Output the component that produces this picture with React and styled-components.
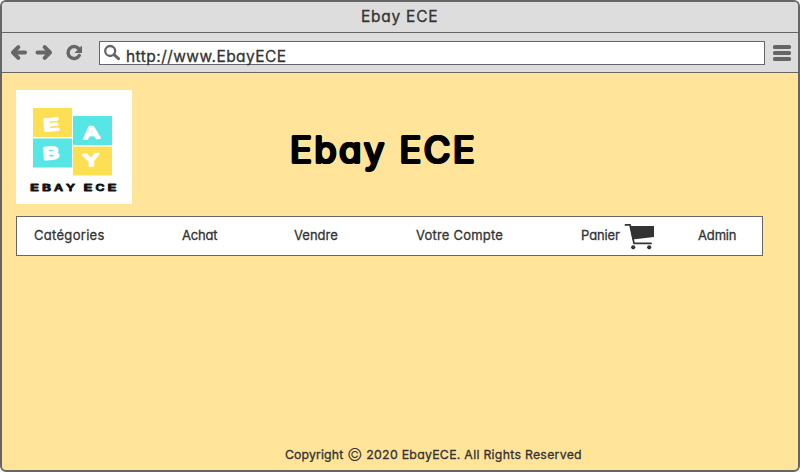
import React from "react";
import styled, { createGlobalStyle } from "styled-components";

const Global = createGlobalStyle`
  * { box-sizing: border-box; }
  body { margin: 0; background: #fff; overflow: hidden; }
`;

const Window = styled.div`
  width: 800px;
  height: 472px;
  display: flex;
  flex-direction: column;
  border: 2px solid #666;
  border-radius: 6px;
  overflow: hidden;
  background: #ffe49a;
  color: #333;
  font-family: Inter, "Liberation Sans", sans-serif;
  font-feature-settings: "cv11", "calt" 0;
`;

const Label = styled.span`
  display: block;
  white-space: pre;
  font-size: ${(p) => p.$size}px;
  line-height: 20px;
  letter-spacing: ${(p) => p.$spacing || 0}px;
  -webkit-text-stroke: ${(p) => p.$stroke || 0.3}px currentColor;
`;

const TitleBar = styled.header`
  height: 31px;
  padding: 5px 0 0 359px;
  background: #ddd;
  border-bottom: 1px solid #666;
`;

const Toolbar = styled.div`
  height: 40px;
  display: flex;
  align-items: flex-start;
  padding: 8px 6px 0 8px;
  background: #ddd;
  border-bottom: 1px solid #666;
`;

const NavIcons = styled.svg`
  width: 80px;
  height: 24px;
  margin-right: 9px;
  flex: none;
`;

const AddressBar = styled.div`
  width: 666px;
  height: 24px;
  display: flex;
  flex: none;
  background: #fff;
  border: 1px solid #666;
`;

const SearchIcon = styled.svg`
  width: 20px;
  height: 22px;
  margin: 0 6px 0 0;
`;

const Address = styled.div`
  padding-top: 5px;
`;

const MenuIcon = styled.svg`
  width: 20px;
  height: 24px;
  margin-left: 7px;
  flex: none;
`;

const Page = styled.main`
  flex: 1;
  display: flex;
  flex-direction: column;
  padding: 17px 0 0 14px;
`;

const Banner = styled.div`
  display: flex;
  height: 114px;
`;

const Logo = styled.svg`
  width: 116px;
  height: 114px;
`;

/* The ring of hard shadows thickens the strokes and rounds their ends. */
const Heading = styled.h1`
  margin: 35px 0 0 158px;
  color: #000;
  font-size: 36.5px;
  line-height: 50px;
  font-weight: 400;
  letter-spacing: 2.4px;
  white-space: pre;
  text-shadow:
    1.4px 0 #000, -1.4px 0 #000, 0 1.4px #000, 0 -1.4px #000,
    1px 1px #000, -1px 1px #000, 1px -1px #000, -1px -1px #000;
`;

const NavBar = styled.nav`
  width: 747px;
  height: 40px;
  margin-top: 12px;
  padding: 8px 0 0 17px;
  display: grid;
  grid-template-columns: 148px 112px 122px 165px 117px 1fr;
  background: #fff;
  border: 1px solid #666;
`;

const NavItem = styled.div`
  display: flex;
  height: 28px;
`;

const Cart = styled.svg`
  width: 32px;
  height: 28px;
  margin: -2px 0 0 3px;
  flex: none;
`;

const Footer = styled.footer`
  display: flex;
  margin: auto 0 5px 269px;
`;

const CopyrightSign = styled.span`
  width: 23px;
  text-align: center;
  font-size: 17px;
  line-height: 20px;
  font-weight: 300;
`;

const items = [
  { text: "Catégories", spacing: 0.3 },
  { text: "Achat", spacing: -0.2 },
  { text: "Vendre", spacing: 0 },
  { text: "Votre Compte", spacing: 0.2 },
  { text: "Panier", spacing: -0.1, cart: true },
  { text: "Admin", spacing: -0.15 },
];

const blocks = [
  [17, 18, "#fddf54", "E", 35.5, 40.5],
  [17, 48.5, "#57e6e6", "B", 35, 69],
  [57, 26, "#57e6e6", "A", 75.5, 48.5],
  [57, 56.5, "#fddf54", "Y", 75.5, 76],
];

function BrandLogo() {
  return (
    <Logo viewBox="0 0 116 114">
      <rect width="116" height="114" fill="#fff" />
      {blocks.map(([x, y, color, letter, tx, ty]) => (
        <g key={letter}>
          <rect x={x} y={y} width="39" height="29" fill={color} />
          <text
            x={tx - 8} y={ty} fontSize="16" fontWeight="400"
            textLength="16" lengthAdjust="spacingAndGlyphs"
            transform={`rotate(-4 ${tx} ${ty - 5})`}
            fill="#fff" stroke="#fff" strokeWidth="2.100" strokeLinejoin="round"
          >{letter}</text>
        </g>
      ))}
      {"EBAY ECE".split("").map((letter, i) => letter !== " " && (
        <text
          key={i} x={[14, 26, 38, 50, 0, 67.5, 79.5, 91.5][i]} y="100.600"
          fontSize="9" fontWeight="600" fill="#111" stroke="#111"
          strokeWidth=".8" strokeLinejoin="round"
          textLength="9" lengthAdjust="spacingAndGlyphs"
        >{letter}</text>
      ))}
    </Logo>
  );
}

export default function App() {
  return (
    <>
      <Global />
      <Window>
        <TitleBar><Label $size={15.5} $spacing={0.75}>Ebay ECE</Label></TitleBar>
        <Toolbar>
          <NavIcons viewBox="10 41 80 24" fill="none" stroke="#666">
            <path d="M14 52.5H25M37.500 52.5H48" strokeWidth="4" strokeLinecap="round" />
            <path d="M18.300 47.200L13 52.500L18.300 57.800M44.700 47.200L50 52.500L44.700 57.800" strokeWidth="4" strokeLinecap="round" strokeLinejoin="round" />
            <path d="M78.500 48.500A6 6 0 1 0 79.300 55.500" strokeWidth="3.400" strokeLinecap="round" />
            <path d="M82 45.500V53H74.500Z" fill="#666" stroke="none" />
          </NavIcons>
          <AddressBar>
            <SearchIcon viewBox="100 42 20 22" fill="none" stroke="#666">
              <circle cx="110.200" cy="51" r="5" strokeWidth="2.300" />
              <path d="M114 54.700L118.500 58.700" strokeWidth="3" strokeLinecap="round" />
            </SearchIcon>
            <Address><Label $size={15.5} $spacing={0.45}>http://www.EbayECE</Label></Address>
          </AddressBar>
          <MenuIcon viewBox="772 41 20 24" fill="#666">
            <rect x="773" y="45" width="18" height="4" rx="1.600" />
            <rect x="773" y="51" width="18" height="4" rx="1.600" />
            <rect x="773" y="57" width="18" height="4" rx="1.600" />
          </MenuIcon>
        </Toolbar>
        <Page>
          <Banner>
            <BrandLogo />
            <Heading>Ebay ECE</Heading>
          </Banner>
          <NavBar>
            {items.map((item) => (
              <NavItem key={item.text}>
                <Label $size={13} $spacing={item.spacing}>{item.text}</Label>
                {item.cart && (
                  <Cart viewBox="623 223 32 28" fill="#333">
                    <path d="M625.500 224.900H630L634 243.400H651" fill="none" stroke="#333" strokeWidth="1.800" strokeLinecap="round" strokeLinejoin="round" />
                    <path d="M630 226H654V237L632.500 239.500Z" />
                    <circle cx="633.200" cy="247.300" r="2.100" />
                    <circle cx="649.200" cy="247.300" r="2.100" />
                  </Cart>
                )}
              </NavItem>
            ))}
          </NavBar>
          <Footer>
            <Label $size={12.3} $spacing={0.12}>Copyright</Label>
            <CopyrightSign>©</CopyrightSign>
            <Label $size={12.3} $spacing={0.28}>2020 EbayECE. All Rights Reserved</Label>
          </Footer>
        </Page>
      </Window>
    </>
  );
}
